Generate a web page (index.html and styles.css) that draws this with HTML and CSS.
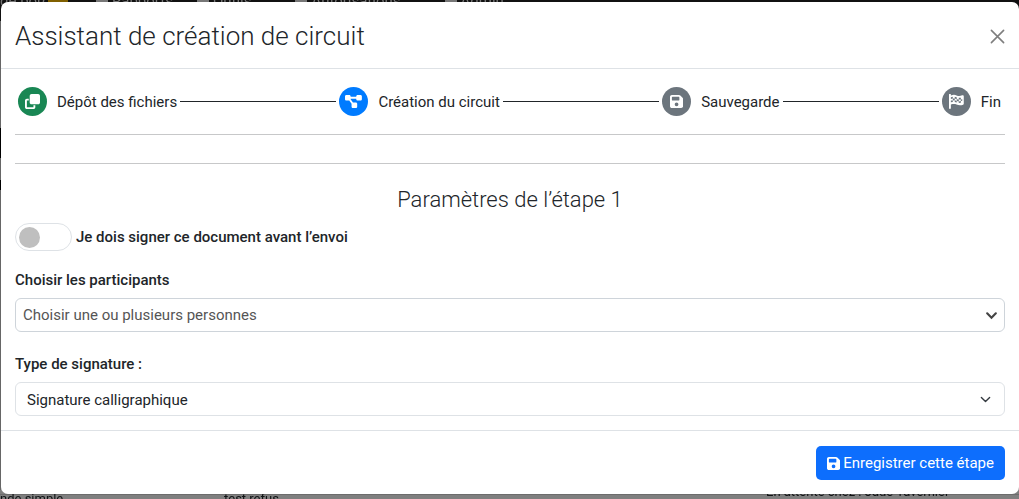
FILE: index.html
```html
<!DOCTYPE html>
<html lang="fr">
<head>
    <meta charset="UTF-8">
    <meta name="viewport" content="width=device-width, initial-scale=1">
    <title>Assistant de création de circuit</title>
    <link rel="stylesheet" href="styles.css">
</head>
<body>
    <!-- Page behind the wizard -->
    <div class="page" aria-hidden="true">
        <div class="navbar">
            <span class="nav-home">de bord</span>
            <span class="nav-badge"></span>
            <span class="nav-item"><i class="nav-icon"></i>Rapports</span>
            <span class="nav-item"><i class="nav-icon"></i>Outils</span>
            <span class="nav-item"><i class="nav-icon"></i>Autorisations</span>
            <span class="nav-item"><i class="nav-icon"></i>Admin</span>
        </div>
        <div class="page-row">
            <span>nde simple</span>
            <span>test refus</span>
            <span class="row-status">En attente chez : Jade Tavernier</span>
        </div>
    </div>

    <div class="modal" role="dialog" aria-labelledby="wizardTitle">
        <div class="modal-header">
            <h1 id="wizardTitle">Assistant de création de circuit</h1>
            <button type="button" class="btn-close" aria-label="Fermer">
                <svg viewBox="0 0 16 16"><path d="M1.5 1.5l13 13M14.5 1.5l-13 13" stroke="currentColor" stroke-width="1.7" stroke-linecap="round"/></svg>
            </button>
        </div>

        <form id="wizardForm" class="modal-body">
            <div class="stepper">
                <div class="step">
                    <span class="step-circle done">
                        <svg viewBox="0 0 512 512"><path fill="currentColor" d="M288 448L64 448l0-224 64 0 0-64-64 0c-35.3 0-64 28.7-64 64L0 448c0 35.3 28.7 64 64 64l224 0c35.3 0 64-28.7 64-64l0-64-64 0 0 64zm-64-96l224 0c35.3 0 64-28.7 64-64l0-224c0-35.3-28.7-64-64-64L224 0c-35.3 0-64 28.7-64 64l0 224c0 35.3 28.7 64 64 64z"/></svg>
                    </span>
                    <span>Dépôt des fichiers</span>
                </div>
                <div class="line"></div>
                <div class="step">
                    <span class="step-circle active">
                        <svg viewBox="0 0 576 512"><path fill="currentColor" d="M0 80C0 53.5 21.5 32 48 32l96 0c26.5 0 48 21.5 48 48l0 16 192 0 0-16c0-26.5 21.5-48 48-48l96 0c26.5 0 48 21.5 48 48l0 96c0 26.5-21.5 48-48 48l-96 0c-26.5 0-48-21.5-48-48l0-16-192 0 0 16c0 1.7-.1 3.4-.3 5L272 288l96 0c26.5 0 48 21.5 48 48l0 96c0 26.5-21.5 48-48 48l-96 0c-26.5 0-48-21.5-48-48l0-96c0-1.7 .1-3.4 .3-5L144 224l-96 0c-26.5 0-48-21.5-48-48L0 80z"/></svg>
                    </span>
                    <span>Création du circuit</span>
                </div>
                <div class="line"></div>
                <div class="step">
                    <span class="step-circle">
                        <svg viewBox="0 0 448 512"><path fill="currentColor" fill-rule="evenodd" d="M64 32C28.7 32 0 60.7 0 96L0 416c0 35.3 28.7 64 64 64l320 0c35.3 0 64-28.7 64-64l0-242.7c0-17-6.7-33.3-18.7-45.3L352 50.7C340 38.7 323.7 32 306.7 32L64 32zm0 96c0-17.7 14.3-32 32-32l192 0c17.7 0 32 14.3 32 32l0 64c0 17.7-14.3 32-32 32L96 224c-17.7 0-32-14.3-32-32l0-64zM224 288a64 64 0 1 1 0 128 64 64 0 1 1 0-128z"/></svg>
                    </span>
                    <span>Sauvegarde</span>
                </div>
                <div class="line"></div>
                <div class="step">
                    <span class="step-circle">
                        <svg viewBox="0 0 512 512"><path fill="currentColor" fill-rule="evenodd" d="M0 24a32 32 0 0 1 64 0v24c100-32 150-18 194 0 76 30 130 22 190-4 24-12 56 0 56 28v264c0 14-8 24-20 28-80 28-150 28-226-4-56-22-114-22-194-2v122a32 32 0 0 1-64 0zM64 110v58l66-12v-58zM196 96v60l68 20v-62zM334 130v60l70-4v-62zM130 156v62l66-2v-60zM264 176v62l70 14v-62zM64 224v60l66-12v-54zM196 216v58l68 20v-56zM334 252v56l70-6v-60zM404 186v56l48-12v-54z"/></svg>
                    </span>
                    <span>Fin</span>
                </div>
            </div>

            <hr>
            <hr>

            <h2>Paramètres de l’étape 1</h2>

            <div class="switch-row">
                <input type="checkbox" id="signFirst" class="switch">
                <label for="signFirst">Je dois signer ce document avant l’envoi</label>
            </div>

            <div class="field">
                <label for="participants">Choisir les participants</label>
                <select id="participants" class="select select-people">
                    <option>Choisir une ou plusieurs personnes</option>
                </select>
            </div>

            <div class="field">
                <label for="signType">Type de signature :</label>
                <select id="signType" class="select select-type">
                    <option>Signature calligraphique</option>
                </select>
            </div>
        </form>

        <div class="modal-footer">
            <button type="submit" form="wizardForm" class="btn-primary">
                <svg viewBox="0 0 448 512"><path fill="currentColor" fill-rule="evenodd" d="M64 32C28.7 32 0 60.7 0 96L0 416c0 35.3 28.7 64 64 64l320 0c35.3 0 64-28.7 64-64l0-242.7c0-17-6.7-33.3-18.7-45.3L352 50.7C340 38.7 323.7 32 306.7 32L64 32zm0 96c0-17.7 14.3-32 32-32l192 0c17.7 0 32 14.3 32 32l0 64c0 17.7-14.3 32-32 32L96 224c-17.7 0-32-14.3-32-32l0-64zM224 288a64 64 0 1 1 0 128 64 64 0 1 1 0-128z"/></svg>
                <span>Enregistrer cette étape</span>
            </button>
        </div>
    </div>
</body>
</html>
```

FILE: styles.css
```css
* {
    box-sizing: border-box;
}

body {
    margin: 0;
    font-family: Roboto, "Liberation Sans", sans-serif;
    font-size: 15px;
    line-height: 22px;
    color: #212529;
    background-color: #7f7f7f;
}

/* Dimmed page */
.page {
    position: fixed;
    inset: 0;
    display: flex;
    flex-direction: column;
    justify-content: space-between;
    overflow: hidden;
    background: linear-gradient(#666 128px, #000 128px, #000 158px, #666 158px, #666 180px, #000 180px, #000 190px, #666 190px) no-repeat left top / 1px 490px;
}

.navbar {
    display: flex;
    align-items: flex-start;
    height: 21px;
    background-color: #111;
    color: #777;
    line-height: 2px;
    white-space: nowrap;
}

.nav-home {
    width: 48px;
}

.nav-badge {
    width: 20px;
    height: 2px;
    margin-right: 28px;
    background-color: #806000;
}

.nav-item {
    display: flex;
    gap: 4px;
    margin-right: 24px;
}

.nav-item:nth-last-child(-n+3) {
    margin-right: 44px;
}

.nav-icon {
    width: 12px;
    height: 2px;
    background-color: #777;
}

.page-row {
    display: grid;
    grid-template-columns: 224px 1fr 253px;
    height: 5px;
    border-top: 1px solid #6c6c6c;
    color: #101214;
    font-size: 13px;
    line-height: 7px;
    white-space: nowrap;
}

.row-status {
    line-height: 0;
    margin-top: -3px;
}

/* Modal */
.modal {
    position: absolute;
    top: 2px;
    left: 1px;
    right: 0;
    background-color: #fff;
    border-radius: 7px;
}

.modal-header {
    display: flex;
    align-items: center;
    justify-content: space-between;
    padding: 15px 14px 13px;
    border-bottom: 1px solid #dee2e6;
}

h1, h2 {
    margin: 0;
    font-weight: 300;
}

h1 {
    font-size: 26px;
    line-height: 38px;
}

h2 {
    margin: 21px 0 8px;
    font-size: 22px;
    line-height: 30px;
    text-align: center;
}

.btn-close {
    display: flex;
    padding: 0;
    border: none;
    background: none;
    color: #000;
    opacity: 0.5;
    cursor: pointer;
}

.btn-close svg {
    width: 15px;
    height: 15px;
}

.modal-body {
    padding: 14px;
}

.stepper {
    display: flex;
    align-items: center;
    padding: 4px 4px 4px 3px;
}

.step {
    display: flex;
    align-items: center;
    gap: 10px;
    white-space: nowrap;
}

.step-circle {
    display: flex;
    align-items: center;
    justify-content: center;
    width: 29px;
    height: 29px;
    border-radius: 50%;
    background-color: #6c757d;
    color: #fff;
}

.step-circle svg {
    height: 15px;
}

.step-circle.done {
    background-color: #198754;
}

.step-circle.active {
    background-color: #007bff;
}

.line {
    flex: 1;
    height: 1px;
    margin: 0 3px;
    background-color: #212529;
}

hr {
    height: 1px;
    margin: 14px 0;
    border: none;
    background-color: #c7c8c9;
}

hr + hr {
    margin: 28px 0 0;
}

.switch-row {
    display: flex;
    align-items: center;
    gap: 4px;
}

.switch-row label, .field label {
    font-weight: 500;
}

.switch {
    display: flex;
    align-items: center;
    appearance: none;
    width: 57px;
    height: 28px;
    margin: 0;
    padding: 0 3px;
    border: 1px solid #dee2e6;
    border-radius: 14px;
    background-color: #fff;
}

.switch::before {
    content: "";
    width: 21px;
    height: 21px;
    border-radius: 50%;
    background-color: #bfbfbf;
}

.switch:checked {
    justify-content: flex-end;
    background-color: #0d6efd;
}

.field {
    margin-top: 18px;
}

.field + .field {
    margin-top: 21px;
}

.field label {
    display: block;
    margin-bottom: 7px;
}

.select {
    display: block;
    appearance: none;
    width: 100%;
    height: 34px;
    border: 1px solid #dee2e6;
    border-radius: 6px;
    background-color: #fff;
    background-repeat: no-repeat;
    color: #212529;
    font-family: inherit;
    font-size: 15px;
}

.select-people {
    padding: 0 28px 0 7px;
    border-color: #ced4da;
    color: #555;
    background-image: url("data:image/svg+xml,%3Csvg xmlns='http://www.w3.org/2000/svg' viewBox='0 0 12 12'%3E%3Cpath fill='none' stroke='%23444' stroke-width='2' stroke-linecap='round' d='M2 4l4 4 4-4'/%3E%3C/svg%3E");
    background-position: right 6px center;
    background-size: 13px 13px;
}

.select-type {
    padding: 1px 32px 0 11px;
    background-image: url("data:image/svg+xml,%3Csvg xmlns='http://www.w3.org/2000/svg' viewBox='0 0 16 16'%3E%3Cpath fill='none' stroke='%23343a40' stroke-width='2' stroke-linecap='round' stroke-linejoin='round' d='m2 5 6 6 6-6'/%3E%3C/svg%3E");
    background-position: right 13px center;
    background-size: 11px 11px;
}

.modal-footer {
    display: flex;
    justify-content: flex-end;
    padding: 15px 14px 14px;
    border-top: 1px solid #dee2e6;
}

.btn-primary {
    display: flex;
    align-items: center;
    gap: 3px;
    height: 34px;
    padding: 0 11px;
    border: none;
    border-radius: 5px;
    background-color: #0d6efd;
    color: #fff;
    font-family: inherit;
    font-size: 15px;
    cursor: pointer;
}

.btn-primary svg {
    height: 15px;
}

.btn-primary:hover {
    background-color: #0b5ed7;
}
```
